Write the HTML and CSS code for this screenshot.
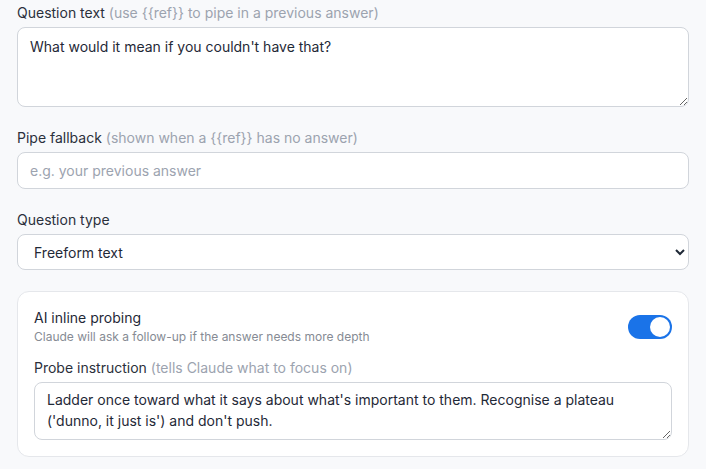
FILE: index.html
```html
<!DOCTYPE html>
<html lang="en">
<head>
  <meta charset="UTF-8" />
  <meta name="viewport" content="width=device-width, initial-scale=1.0" />
  <title>Question editor</title>
  <link rel="stylesheet" href="styles.css">
</head>
<body>
  <div class="editor">
    <div class="field">
      <label class="label" for="q-text">Question text <span class="hint">(use {{ref}} to pipe in a previous answer)</span></label>
      <textarea id="q-text" class="input textarea">What would it mean if you couldn't have that?</textarea>
    </div>

    <div class="field">
      <label class="label" for="q-fallback">Pipe fallback <span class="hint">(shown when a {{ref}} has no answer)</span></label>
      <input id="q-fallback" class="input" type="text" placeholder="e.g. your previous answer">
    </div>

    <div class="field">
      <label class="label" for="q-type">Question type</label>
      <select id="q-type" class="input select">
        <option>Freeform text</option>
        <option>Single choice</option>
        <option>Multiple choice</option>
        <option>Rating scale</option>
      </select>
    </div>

    <div class="card">
      <div class="card-head">
        <div>
          <div class="card-title">AI inline probing</div>
          <div class="card-sub">Claude will ask a follow-up if the answer needs more depth</div>
        </div>
        <label class="toggle">
          <input type="checkbox" checked>
          <span class="track"></span>
        </label>
      </div>
      <label class="label" for="q-probe">Probe instruction <span class="hint">(tells Claude what to focus on)</span></label>
      <textarea id="q-probe" class="input textarea probe">Ladder once toward what it says about what's important to them. Recognise a plateau ('dunno, it just is') and don't push.</textarea>
    </div>
  </div>
</body>
</html>
```

FILE: styles.css
```css
* {
  box-sizing: border-box;
  margin: 0;
  padding: 0;
}
body {
  font-family: Inter, "Noto Sans", sans-serif;
  font-size: 14px;
  line-height: 1.5;
  color: #1f2937;
  background-color: #f8f9fb;
}
.editor {
  padding: 2px 17px 0;
}
.field {
  margin-bottom: 20px;
}
.label {
  display: block;
  font-weight: 400;
  color: #2b303b;
  margin-bottom: 4px;
}
.hint {
  color: #9ca3af;
}
.input {
  display: block;
  width: 100%;
  font-family: inherit;
  font-size: 14px;
  line-height: 21px;
  color: #1f2937;
  background-color: #fff;
  border: 1px solid #d1d5db;
  border-radius: 8px;
  padding: 7px 12px;
  outline: none;
}
.input::placeholder {
  color: #9ca3af;
}
.textarea {
  height: 80px;
  padding-top: 8px;
  resize: vertical;
}
.select {
  height: 36px;
  padding: 0 8px 0 12px;
}
.card {
  background-color: #fff;
  border: 1px solid #e5e7eb;
  border-radius: 12px;
  padding: 15px 16px 16px;
  margin-top: 21px;
}
.card-head {
  display: flex;
  justify-content: space-between;
  align-items: center;
  margin-bottom: 11px;
}
.card-title {
  color: #1f2937;
}
.card-sub {
  font-size: 12px;
  line-height: 18px;
  color: #868b94;
}
.toggle {
  position: relative;
  display: block;
  width: 44px;
  height: 24px;
  cursor: pointer;
}
.toggle input {
  display: none;
}
.track {
  display: block;
  width: 100%;
  height: 100%;
  border-radius: 12px;
  background-color: #d1d5db;
}
.track::after {
  content: "";
  position: absolute;
  top: 2px;
  left: 2px;
  width: 20px;
  height: 20px;
  border-radius: 50%;
  background-color: #fff;
}
.toggle input:checked + .track {
  background-color: #1a73e8;
}
.toggle input:checked + .track::after {
  left: 22px;
}
.probe {
  height: 58px;
  padding-top: 6px;
}
```
